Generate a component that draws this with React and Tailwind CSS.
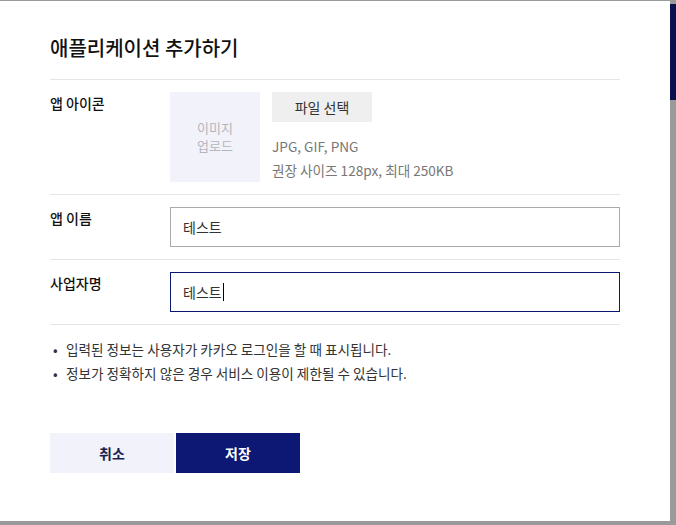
import React from 'react';

const font = "font-['Noto_Sans_CJK_KR','Noto_Sans',sans-serif]";

export default function App() {
  return (
    <div className={`flex h-[525px] w-[676px] overflow-hidden bg-[#9a9a9a] ${font}`}>
      {/* MODAL */}
      <div className="mt-px h-[520px] w-[670px] shrink-0 bg-white px-[50px] pt-[33px]">
        <h2 className="border-b border-[#e5e5e5] pb-[17px] text-[20px] font-medium leading-[28px] text-[#111]">
          애플리케이션 추가하기
        </h2>

        {/* App icon */}
        <div className="flex border-b border-[#e5e5e5] py-3">
          <div className="w-[120px] text-[14px] font-medium leading-[22px] text-[#111]">앱 아이콘</div>
          <div className="flex h-[90px] w-[90px] flex-col items-center justify-center bg-[#f1f2fa] text-[13px] leading-[18px] text-[#b5b5bd]">
            <span>이미지</span>
            <span>업로드</span>
          </div>
          <div className="ml-3 flex flex-col">
            <button className="h-[30px] w-[100px] bg-[#efefef] text-[14px] text-[#333]">파일 선택</button>
            <p className="mt-3 text-[13.6px] leading-[24px] text-[#777]">JPG, GIF, PNG</p>
            <p className="text-[13.6px] leading-[24px] text-[#777]">권장 사이즈 128px, 최대 250KB</p>
          </div>
        </div>

        {/* App name */}
        <div className="flex border-b border-[#e5e5e5] py-3">
          <div className="w-[120px] text-[14px] font-medium leading-[22px] text-[#111]">앱 이름</div>
          <div className="flex h-10 flex-1 items-center border border-[#aaa] px-3 text-[14px] text-[#333]">테스트</div>
        </div>

        {/* Business name */}
        <div className="flex border-b border-[#e5e5e5] py-3">
          <div className="w-[120px] text-[14px] font-medium leading-[22px] text-[#111]">사업자명</div>
          <div className="flex h-10 flex-1 items-center border border-[#0c1870] px-3 text-[14px] text-[#333]">
            테스트<span className="ml-px h-[18px] w-px bg-black" />
          </div>
        </div>

        {/* Notes */}
        <ul className="pt-3 text-[13.6px] leading-[24px] text-[#333]">
          <li className="flex">
            <span className="w-4 pl-[3px]">•</span>입력된 정보는 사용자가 카카오 로그인을 할 때 표시됩니다.
          </li>
          <li className="flex">
            <span className="w-4 pl-[3px]">•</span>정보가 정확하지 않은 경우 서비스 이용이 제한될 수 있습니다.
          </li>
        </ul>

        {/* Buttons */}
        <div className="mt-12 flex gap-[2px]">
          <button className="h-10 w-[124px] bg-[#f1f2fa] text-[14px] font-bold text-[#1a1f4f]">취소</button>
          <button className="h-10 w-[124px] bg-[#0c1873] text-[14px] font-bold text-white">저장</button>
        </div>
      </div>

      {/* SCROLLBAR */}
      <div className="flex-1 pt-1">
        <div className="h-[96px] bg-[#0a0f4e]" />
      </div>
    </div>
  );
}
